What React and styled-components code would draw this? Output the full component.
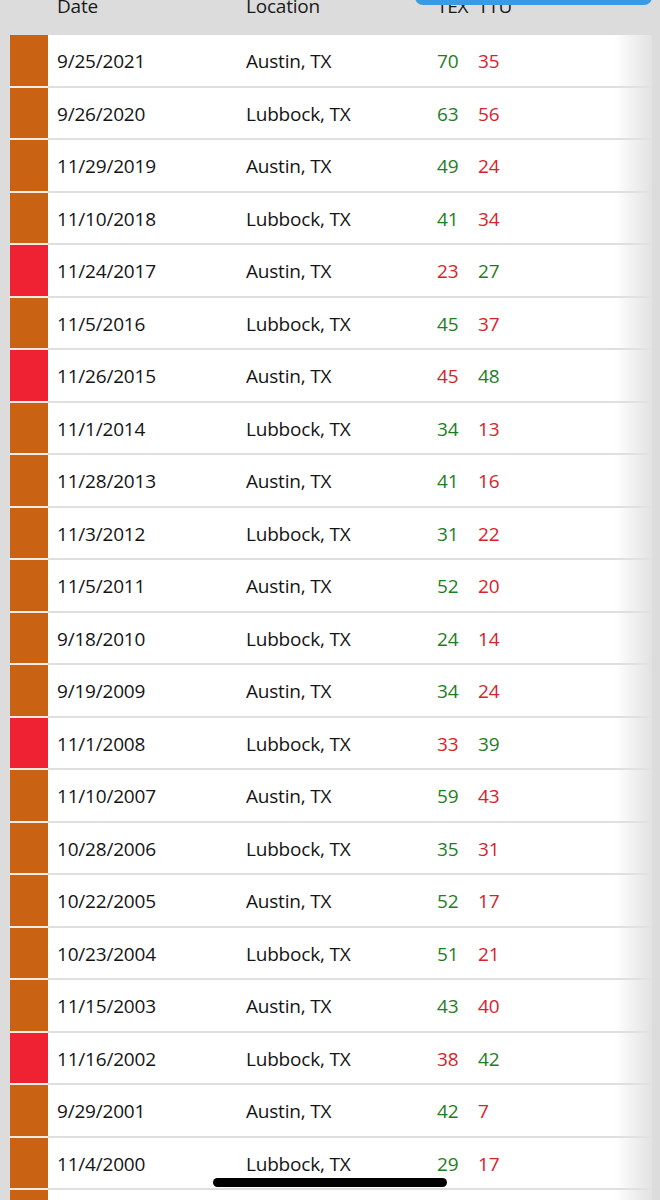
import styled, { createGlobalStyle } from "styled-components"

const games = [
    ["9/25/2021", "Austin, TX", 70, 35],
    ["9/26/2020", "Lubbock, TX", 63, 56],
    ["11/29/2019", "Austin, TX", 49, 24],
    ["11/10/2018", "Lubbock, TX", 41, 34],
    ["11/24/2017", "Austin, TX", 23, 27],
    ["11/5/2016", "Lubbock, TX", 45, 37],
    ["11/26/2015", "Austin, TX", 45, 48],
    ["11/1/2014", "Lubbock, TX", 34, 13],
    ["11/28/2013", "Austin, TX", 41, 16],
    ["11/3/2012", "Lubbock, TX", 31, 22],
    ["11/5/2011", "Austin, TX", 52, 20],
    ["9/18/2010", "Lubbock, TX", 24, 14],
    ["9/19/2009", "Austin, TX", 34, 24],
    ["11/1/2008", "Lubbock, TX", 33, 39],
    ["11/10/2007", "Austin, TX", 59, 43],
    ["10/28/2006", "Lubbock, TX", 35, 31],
    ["10/22/2005", "Austin, TX", 52, 17],
    ["10/23/2004", "Lubbock, TX", 51, 21],
    ["11/15/2003", "Austin, TX", 43, 40],
    ["11/16/2002", "Lubbock, TX", 38, 42],
    ["9/29/2001", "Austin, TX", 42, 7],
    ["11/4/2000", "Lubbock, TX", 29, 17],
    ["11/25/1999", "Austin, TX", 58, 7],
]

function App() {
    return (
        <Page>
            <GlobalStyle />
            <FloatingButton />
            <Header>
                <HeadCell />
                <HeadCell>Date</HeadCell>
                <HeadCell>Location</HeadCell>
                <HeadCell>TEX</HeadCell>
                <HeadCell>TTU</HeadCell>
            </Header>
            <List>
                {
                    games.map(([date, location, tex, ttu]) => {
                        const won = tex > ttu
                        return (
                            <Row key={date}>
                                <ResultBar $won={won} />
                                <Cell>{date}</Cell>
                                <Cell>{location}</Cell>
                                <Score $good={won}>{tex}</Score>
                                <Score $good={!won}>{ttu}</Score>
                            </Row>
                        )
                    })
                }
            </List>
            <HomeIndicator />
        </Page>
    )
}

const GlobalStyle = createGlobalStyle`
    body {
        margin: 0;
        background: #dcdcdc;
        font-family: "Open Sans", "Noto Sans", sans-serif;
        overflow: hidden;
    }
`

const Page = styled.div`
    position: relative;
    width: 660px;
    height: 1200px;
    overflow: hidden;
    background: #dcdcdc;
`

const columns = `38px 189px 191px 41px 1fr`

const Header = styled.div`
    display: grid;
    grid-template-columns: ${columns};
    height: 35px;
    padding-left: 10px;
    overflow: hidden;
    background: #dcdcdc;
`

const HeadCell = styled.div`
    margin-top: -8px;
    padding-left: 9px;
    font-size: 19px;
    letter-spacing: -0.2px;
    line-height: 28px;
    color: #1a1a1a;
`

const FloatingButton = styled.div`
    position: absolute;
    top: -30px;
    left: 415px;
    width: 237px;
    height: 35px;
    border-radius: 8px;
    background: #3b9be2;
    z-index: 2;
`

const List = styled.div`
    position: relative;
    margin-left: 10px;
    width: 642px;
    &::after {
        content: "";
        position: absolute;
        top: 0;
        right: 0;
        bottom: 0;
        width: 38px;
        background: linear-gradient(to right, rgba(228, 228, 228, 0), #e2e2e2);
    }
`

const Row = styled.div`
    display: grid;
    grid-template-columns: ${columns};
    height: 52.5px;
    background: #fff;
`

const ResultBar = styled.div`
    background: ${(p) => (p.$won ? "#c96212" : "#ee2233")};
    border-bottom: 2px solid #f3ebe4;
`

const Cell = styled.div`
    display: flex;
    align-items: center;
    padding: 2px 0 0 9px;
    font-size: 19px;
    letter-spacing: -0.2px;
    color: #141414;
    white-space: nowrap;
    border-bottom: 2px solid #dfdfdf;
`

const Score = styled(Cell)`
    color: ${(p) => (p.$good ? "#1f7d24" : "#d8222a")};
`

const HomeIndicator = styled.div`
    position: absolute;
    left: 213px;
    top: 1178px;
    width: 234px;
    height: 9px;
    border-radius: 5px;
    background: #000;
    z-index: 3;
`

export default App
